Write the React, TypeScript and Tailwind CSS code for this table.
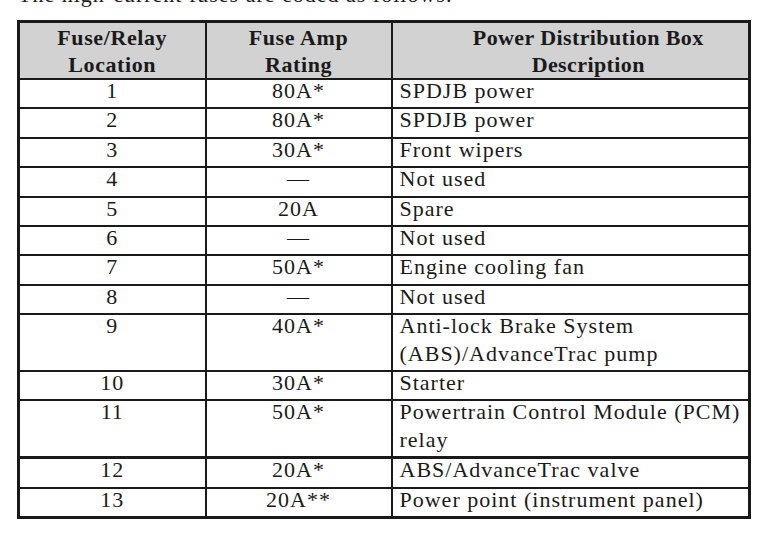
const rows: [string, string, string[]][] = [
	["1", "80A*", ["SPDJB power"]],
	["2", "80A*", ["SPDJB power"]],
	["3", "30A*", ["Front wipers"]],
	["4", "—", ["Not used"]],
	["5", "20A", ["Spare"]],
	["6", "—", ["Not used"]],
	["7", "50A*", ["Engine cooling fan"]],
	["8", "—", ["Not used"]],
	["9", "40A*", ["Anti-lock Brake System", "(ABS)/AdvanceTrac pump"]],
	["10", "30A*", ["Starter"]],
	["11", "50A*", ["Powertrain Control Module (PCM)", "relay"]],
	["12", "20A*", ["ABS/AdvanceTrac valve"]],
	["13", "20A**", ["Power point (instrument panel)"]],
];

// table cells don't inherit fonts here, so every cell gets the font itself
const cell = "border-2 border-[#1a1a1a] align-top font-['Liberation_Serif'] text-[22px] text-[#1a1a1a]";

export default function App() {
	return (
		<div className="w-[770px] h-[538px] overflow-hidden bg-white font-['Liberation_Serif'] text-[22px] text-[#1a1a1a] tracking-[1px]">
			<p className="-mt-[15px] ml-[18px] leading-[20px]">The high-current fuses are coded as follows:</p>
			<table className="ml-[17px] mt-[15px] w-[734px] table-fixed border-collapse border-[3px] border-[#1a1a1a]">
				<colgroup>
					<col className="w-[187px]" />
					<col className="w-[186px]" />
					<col />
				</colgroup>
				<thead>
					<tr className="bg-[#d2d2d2] leading-[27px]">
						<th className={`${cell} font-bold tracking-[0.6px] h-[57px] pt-[1px]`}>Fuse/Relay<br />Location</th>
						<th className={`${cell} font-bold tracking-[0.6px] pt-[1px]`}>Fuse Amp<br />Rating</th>
						<th className={`${cell} font-bold tracking-[0.4px] pt-[1px] pl-[36px]`}>Power Distribution Box<br />Description</th>
					</tr>
				</thead>
				<tbody>
					{rows.map(([loc, amp, desc]) => (
						<tr key={loc} className={loc === "12" ? "leading-[27.4px] border-t-[3px] border-[#1a1a1a]" : "leading-[27.4px]"}>
							<td className={`${cell} text-center`}>
								<div className="relative -top-[3px]">{loc}</div>
							</td>
							<td className={`${cell} text-center`}>
								<div className="relative -top-[3px]">{amp}</div>
							</td>
							<td className={`${cell} pl-[7px] tracking-[1px]`}>
								<div className="relative -top-[3px]">
									{desc.map((d) => (
										<div key={d}>{d}</div>
									))}
								</div>
							</td>
						</tr>
					))}
				</tbody>
			</table>
		</div>
	);
}
